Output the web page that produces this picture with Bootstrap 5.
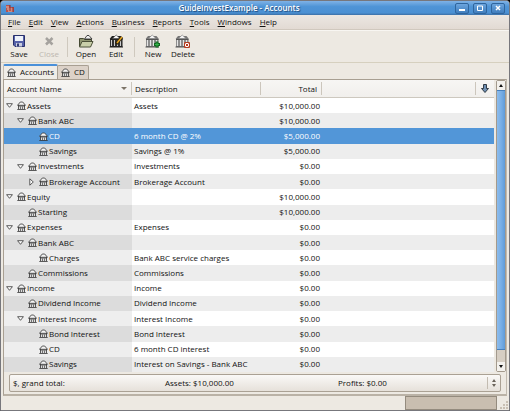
<!DOCTYPE html>
<html lang="en">
<head>
<meta charset="utf-8">
<meta name="viewport" content="width=device-width, initial-scale=1">
<title>GuideInvestExample - Accounts</title>
<link rel="stylesheet" href="https://cdn.jsdelivr.net/npm/bootstrap@5.3.0/dist/css/bootstrap.min.css">
<style>
body{font:8px/12px "Open Sans","Noto Sans",sans-serif;color:#111;background:#000}
button{font:inherit;color:inherit;background:none;border:0;padding:0}
svg{display:block;flex:none}
a{color:inherit;text-decoration:none}
.win{min-height:100vh;background:#ede9e2;border:1px solid #77777c;border-radius:4px 4px 0 0;overflow:hidden}
.titlebar{height:14px;padding:0 4px;background:linear-gradient(#7fb2e6,#4f94d6 40%,#4a90d3 85%,#3b6fa5);color:#fff;font-weight:600;text-shadow:1px 1px 1px #1d4877}
.winbtn{width:14px;height:11px;border:1px solid #2f659d;border-radius:2px;background:linear-gradient(#6ca5de,#3f7dbd);display:flex;align-items:center;justify-content:center}
.menubar{height:15px;padding:0 7px;background:linear-gradient(#ebe7e2,#e2dad3);border-bottom:1px solid #d0c8be}
.tools{height:33px;padding:3px 3px 0;border-top:1px solid #f8f6f2;border-bottom:1px solid #d6d0bf}
.tool{display:flex;flex-direction:column;align-items:center;width:30px}
.tool:disabled{color:#bdb8b0}
.vr-line{width:1px;height:20px;background:#cfc9be;margin:3px 3px 0}
.tabs{padding:1px 2px 0;height:16px}
.tabs button{display:flex;align-items:center;gap:4px;border:1px solid #a89f92;border-bottom:0;border-radius:2px 2px 0 0;padding:0 3px 1px 3px;background:#dcd2c8;height:14px}
.tabs button+button{margin-left:-1px}
.tabs button.active{background:#efece7;border-top:2px solid #4a90d9;border-left-color:#c4bdb2;height:15px}
.frame{margin:0 2px;border:1px solid #a89f92;border-right-color:#c1baaf;border-bottom:2px solid #bab2a6;padding-bottom:2px}
.ledger{width:100%;height:292px;table-layout:fixed;border-collapse:separate;border-spacing:0;background:#fff}
.ledger th{height:18px;padding:0 3px;font-weight:400;background:linear-gradient(#f7f6f4,#f1efec);border-bottom:1px solid #cdc8bf;vertical-align:middle}
.ledger th .lab{border-right:1px solid #ccc6bc;height:13px;line-height:13px}
.ledger td{padding:0 2px;height:15px;line-height:12px;white-space:nowrap}
.ledger tbody tr td:first-child{background:#eee;padding:0}
.ledger tbody tr:nth-child(even) td{background:#ededed}
.ledger tbody tr:nth-child(even) td:first-child{background:#dcdcdc}
.ledger tbody tr.picked td,.ledger tbody tr.picked td:first-child{background:#5296d8;color:#fff}
.node{display:flex;align-items:center}
.node>svg{margin:0 1px 0 2px}
.twist{width:11px;display:flex;justify-content:center}
.l1{padding-left:11px}.l2{padding-left:22px}
.leaf1{padding-left:22px}.leaf2{padding-left:33px}
.sbar{width:10px;margin-left:2px;border:1px solid #a39a8d;border-radius:2px;background:#d6cec3}
.sbar button{height:9px;width:100%;background:#f3f1ed;display:flex;align-items:center;justify-content:center}
.thumb{flex:1;margin-bottom:12px;border:1px solid #4680bd;border-width:1px 0;background:linear-gradient(90deg,#8dbcec,#79afe6 50%,#5f9bd9)}
.summary{margin:2px 5px 0 5px;height:18px;border:1px solid #aaa194;border-radius:2px;background:linear-gradient(#faf9f7,#e6e1da);padding:0 4px 0 3px;display:flex;align-items:center;text-align:left}
.s1{flex:0 0 152px}.s2{flex:0 0 173px}
.spin{border-left:1px solid #c3bcb1;padding-left:4px;height:12px}
.status{height:14px;gap:3px}
.meter{width:92px;height:14px;border:1px solid #948b7e;background:#c9beb0}
</style>
<script src="https://cdn.jsdelivr.net/npm/bootstrap@5.3.0/dist/js/bootstrap.bundle.min.js"></script>
</head>
<body>
<svg width="0" height="0" class="position-absolute" aria-hidden="true">
<symbol id="bank" viewBox="0 0 9 9"><path d="M1.500 4.500h6v3.500h-6z" fill="#ddd"/><path d="M.5 4.300 3.300 1h2.400l2.800 3.300z" fill="#f4f4f4" stroke="#333" stroke-width=".8"/><path d="M1.500 4v4M7.500 4v4" stroke="#333" stroke-width=".8"/><path d="M3.500 5.500v2.500M5.500 5.500v2.500" stroke="#555" stroke-width=".8"/><path d="M1 5h7" stroke="#444" stroke-width=".8"/><path d="M.3 8.500h8.400" stroke="#333" stroke-width=".8"/></symbol>
<symbol id="bigbank" viewBox="0 0 15 14"><path d="M1 4.500 3 2h8.500l2 2.500V13H1z" fill="#777"/><path d="M3.500 4.500 7.200 1 11 4.500z" fill="#f6f6f6" stroke="#777" stroke-width=".6"/><path d="M2.500 6v6M5.500 6v6M8.500 6v6M11.500 6v6" stroke="#e4e4e4" stroke-width="1.400"/><path d="M1 5.500h12.500M.5 13h13.500" stroke="#555"/></symbol>
<symbol id="darkbank" viewBox="0 0 15 14"><path d="M1 4.500 3 2h8.500l2 2.500V13H1z" fill="#222"/><path d="M3.500 4.500 7.200 1 11 4.500z" fill="#f6f6f6" stroke="#444" stroke-width=".6"/><path d="M2.500 6v6M5.500 6v6M8.500 6v6M11.500 6v6" stroke="#ccc" stroke-width="1.200"/><path d="M1 5.500h12.500M.5 13h13.500" stroke="#222"/></symbol>
<symbol id="open" viewBox="0 0 7 5"><path d="M.6.7h5.800L3.500 4.300z" fill="#fff" stroke="#333" stroke-width=".8"/></symbol>
<symbol id="shut" viewBox="0 0 5 8"><path d="M.8.8v6.400L4.300 4z" fill="#fff" stroke="#333" stroke-width=".8"/></symbol>
</svg>
<div class="win d-flex flex-column">
<header class="titlebar d-flex align-items-center">
<svg width="10" height="9" viewBox="0 0 10 9"><path d="M1 1h4v2h4v5H1z" fill="#b8534c"/><path d="M1 3h3M2 5h6M3 7h5" stroke="#e7c1b2"/><path d="M5 1v6M8 3v5" stroke="#8a2c30"/></svg>
<span class="flex-fill text-center ps-2">GuideInvestExample - Accounts</span>
<span class="d-flex gap-1">
<button class="winbtn" aria-label="Minimize"><svg width="6" height="6"><path d="M0 5h6" stroke="#fff" stroke-width="2"/></svg></button>
<button class="winbtn" aria-label="Maximize"><svg width="6" height="6"><path d="M.5 1h5v4.500h-5z" fill="none" stroke="#fff"/></svg></button>
<button class="winbtn" aria-label="Close window"><svg width="6" height="6"><path d="m1 1 4 4M5 1 1 5" stroke="#fff" stroke-width="1.500"/></svg></button>
</span>
</header>
<nav class="menubar d-flex align-items-center gap-2">
<a href="#"><u>F</u>ile</a><a href="#"><u>E</u>dit</a><a href="#"><u>V</u>iew</a><a href="#"><u>A</u>ctions</a><a href="#"><u>B</u>usiness</a><a href="#"><u>R</u>eports</a><a href="#"><u>T</u>ools</a><a href="#"><u>W</u>indows</a><a href="#"><u>H</u>elp</a>
</nav>
<div class="tools d-flex" role="toolbar">
<button class="tool"><svg width="14" height="14" viewBox="0 0 14 14"><path d="M1.500 1.500h11v11h-9.500l-1.500-1.500z" fill="#5661a8" stroke="#28306c"/><path d="M3 2h8v5H3z" fill="#eef2fa"/><path d="M4 9h6v3.500H4z" fill="#c9cde0"/><path d="M5 9.500h2v3H5z" fill="#333b74"/></svg>Save</button>
<button class="tool" disabled><svg width="14" height="14" viewBox="0 0 14 14"><path d="m4 4 6.500 6.500M10.500 4 4 10.500" stroke="#a5a29e" stroke-width="2.500"/></svg>Close</button>
<span class="vr-line"></span>
<button class="tool"><svg width="16" height="14" viewBox="0 0 16 14"><path d="M1.500 12.500V4.500h4l1 1h7v3" fill="#8f9570" stroke="#454a33"/><path d="M6.500 5 9 1.500h2L14 5z" fill="#eee" stroke="#222" stroke-width=".8"/><path d="M1.500 13 4 7.500h11L12.500 13z" fill="#c9cfa9" stroke="#4b5038"/></svg>Open</button>
<button class="tool"><svg width="15" height="14" viewBox="0 0 15 14"><use href="#darkbank" width="15" height="14"/><path d="m7 10 6-7" stroke="#2a210d" stroke-width="3"/><path d="m8 9 5-6" stroke="#e6a727" stroke-width="1.500"/></svg>Edit</button>
<span class="vr-line"></span>
<button class="tool"><svg width="16" height="14" viewBox="0 0 16 14"><use href="#bigbank" width="15" height="14"/><path d="M12 7.500v6M9 10.500h6" stroke="#146622" stroke-width="3"/><path d="M12 8.500v4M10 10.500h4" stroke="#35b64a"/></svg>New</button>
<button class="tool"><svg width="16" height="14" viewBox="0 0 16 14"><use href="#bigbank" width="15" height="14"/><path d="M9.500 8.500h5v5h-5z" fill="#fff" stroke="#b13d21"/><path d="m10.500 9.500 3 3M13.500 9.500l-3 3" stroke="#c23d20"/></svg>Delete</button>
</div>
<div class="tabs d-flex align-items-end" role="tablist">
<button class="active" role="tab" aria-selected="true"><svg width="9" height="9"><use href="#bank"/></svg>Accounts</button>
<button role="tab" aria-selected="false"><svg width="9" height="9"><use href="#bank"/></svg>CD</button>
</div>
<main class="frame">
<div class="d-flex">
<table class="ledger">
<colgroup><col style="width:128px"><col style="width:129px"><col style="width:61px"><col><col style="width:18px"></colgroup>
<thead><tr>
<th class="pe-0"><div class="lab d-flex align-items-center justify-content-between pe-1">Account Name<svg width="6" height="3"><path d="M0 0h6L3 3z" fill="#7c7468"/></svg></div></th>
<th class="pe-0"><div class="lab">Description</div></th>
<th class="pe-0"><div class="lab text-end pe-1">Total</div></th>
<th class="pe-0"><div class="lab">&nbsp;</div></th>
<th><button class="d-block mx-auto" aria-label="Choose columns"><svg width="8" height="9" viewBox="0 0 8 9"><path d="M2.500.5h3v4h2L4 8.500.5 4.500h2z" fill="#6f8fb2" stroke="#222c38" stroke-width=".9"/></svg></button></th>
</tr></thead>
<tbody>
<tr><td><div class="node"><button class="twist" aria-label="Collapse"><svg width="7" height="5"><use href="#open"/></svg></button><svg width="9" height="9"><use href="#bank"/></svg>Assets</div></td><td>Assets</td><td class="text-end">$10,000.00</td><td></td><td></td></tr>
<tr><td><div class="node l1"><button class="twist" aria-label="Collapse"><svg width="7" height="5"><use href="#open"/></svg></button><svg width="9" height="9"><use href="#bank"/></svg>Bank ABC</div></td><td></td><td class="text-end">$10,000.00</td><td></td><td></td></tr>
<tr class="picked"><td><div class="node leaf2"><svg width="9" height="9"><use href="#bank"/></svg>CD</div></td><td>6 month CD @ 2%</td><td class="text-end">$5,000.00</td><td></td><td></td></tr>
<tr><td><div class="node leaf2"><svg width="9" height="9"><use href="#bank"/></svg>Savings</div></td><td>Savings @ 1%</td><td class="text-end">$5,000.00</td><td></td><td></td></tr>
<tr><td><div class="node l1"><button class="twist" aria-label="Collapse"><svg width="7" height="5"><use href="#open"/></svg></button><svg width="9" height="9"><use href="#bank"/></svg>Investments</div></td><td>Investments</td><td class="text-end">$0.00</td><td></td><td></td></tr>
<tr><td><div class="node l2"><button class="twist" aria-label="Expand"><svg width="5" height="8"><use href="#shut"/></svg></button><svg width="9" height="9"><use href="#bank"/></svg>Brokerage Account</div></td><td>Brokerage Account</td><td class="text-end">$0.00</td><td></td><td></td></tr>
<tr><td><div class="node"><button class="twist" aria-label="Collapse"><svg width="7" height="5"><use href="#open"/></svg></button><svg width="9" height="9"><use href="#bank"/></svg>Equity</div></td><td></td><td class="text-end">$10,000.00</td><td></td><td></td></tr>
<tr><td><div class="node leaf1"><svg width="9" height="9"><use href="#bank"/></svg>Starting</div></td><td></td><td class="text-end">$10,000.00</td><td></td><td></td></tr>
<tr><td><div class="node"><button class="twist" aria-label="Collapse"><svg width="7" height="5"><use href="#open"/></svg></button><svg width="9" height="9"><use href="#bank"/></svg>Expenses</div></td><td>Expenses</td><td class="text-end">$0.00</td><td></td><td></td></tr>
<tr><td><div class="node l1"><button class="twist" aria-label="Collapse"><svg width="7" height="5"><use href="#open"/></svg></button><svg width="9" height="9"><use href="#bank"/></svg>Bank ABC</div></td><td></td><td class="text-end">$0.00</td><td></td><td></td></tr>
<tr><td><div class="node leaf2"><svg width="9" height="9"><use href="#bank"/></svg>Charges</div></td><td>Bank ABC service charges</td><td class="text-end">$0.00</td><td></td><td></td></tr>
<tr><td><div class="node leaf1"><svg width="9" height="9"><use href="#bank"/></svg>Commissions</div></td><td>Commissions</td><td class="text-end">$0.00</td><td></td><td></td></tr>
<tr><td><div class="node"><button class="twist" aria-label="Collapse"><svg width="7" height="5"><use href="#open"/></svg></button><svg width="9" height="9"><use href="#bank"/></svg>Income</div></td><td>Income</td><td class="text-end">$0.00</td><td></td><td></td></tr>
<tr><td><div class="node leaf1"><svg width="9" height="9"><use href="#bank"/></svg>Dividend Income</div></td><td>Dividend Income</td><td class="text-end">$0.00</td><td></td><td></td></tr>
<tr><td><div class="node l1"><button class="twist" aria-label="Collapse"><svg width="7" height="5"><use href="#open"/></svg></button><svg width="9" height="9"><use href="#bank"/></svg>Interest Income</div></td><td>Interest Income</td><td class="text-end">$0.00</td><td></td><td></td></tr>
<tr><td><div class="node leaf2"><svg width="9" height="9"><use href="#bank"/></svg>Bond Interest</div></td><td>Bond Interest</td><td class="text-end">$0.00</td><td></td><td></td></tr>
<tr><td><div class="node leaf2"><svg width="9" height="9"><use href="#bank"/></svg>CD</div></td><td>6 month CD interest</td><td class="text-end">$0.00</td><td></td><td></td></tr>
<tr><td><div class="node leaf2"><svg width="9" height="9"><use href="#bank"/></svg>Savings</div></td><td>Interest on Savings - Bank ABC</td><td class="text-end">$0.00</td><td></td><td></td></tr>
</tbody>
</table>
<div class="sbar d-flex flex-column">
<button aria-label="Scroll up"><svg width="4" height="3"><path d="M0 3h4L2 0z" fill="#111"/></svg></button>
<div class="thumb"></div>
<button aria-label="Scroll down"><svg width="4" height="3"><path d="M0 0h4L2 3z" fill="#111"/></svg></button>
</div>
</div>
<div class="d-flex"><button class="summary flex-fill"><span class="s1">$, grand total:</span><span class="s2">Assets: $10,000.00</span><span class="flex-fill">Profits: $0.00</span><span class="spin d-flex align-items-center"><svg width="4" height="8"><path d="M0 3h4L2 0zM0 5h4L2 8z" fill="#6b645b"/></svg></span></button></div>
</main>
<footer class="status d-flex justify-content-end">
<div class="meter" role="progressbar" aria-label="Progress"></div>
<svg class="align-self-end" width="9" height="9"><path d="M6 0h2v2H6zM6 3h2v2H6zM3 3h2v2H3zM6 6h2v2H6zM3 6h2v2H3zM0 6h2v2H0z" fill="#c8bfb3"/></svg>
</footer>
</div>
</body>
</html>
